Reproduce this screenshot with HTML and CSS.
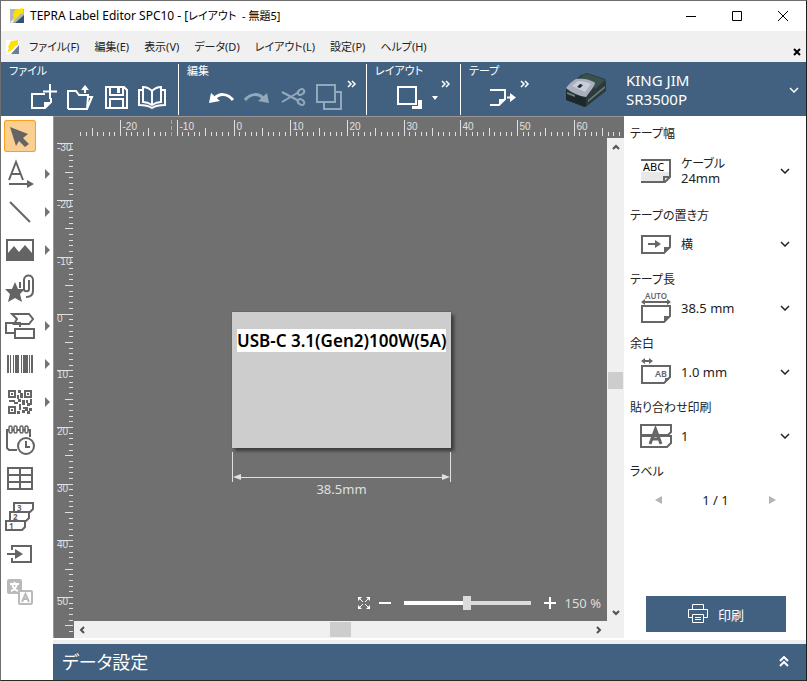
FILE: index.html
```html
<!DOCTYPE html>
<html lang="ja">
<head>
<meta charset="utf-8">
<title>TEPRA Label Editor SPC10</title>
<link rel="stylesheet" href="styles.css">
</head>
<body>
<div class="window">
  <header class="titlebar">
    <svg class="logo" viewBox="0 0 16 16" aria-hidden="true"><path fill="#b4b7ba" d="M1 1h14v14H1z"/><path fill="#35536f" d="M15 7v8H6z"/><path fill="#ffe100" d="M6 2 14 0v5l-3 1-2 3-6 4 2-4-1-2z"/><path fill="#fff" d="m1 14 5-3-3 4z"/></svg>
    <h1 class="title">TEPRA Label Editor SPC10 - [<span class="ja">レイアウト&nbsp; - 無題5]</span></h1>
    <div class="caption-buttons">
      <button aria-label="最小化"><svg viewBox="0 0 12 12"><path d="M1 6.500h10"/></svg></button>
      <button aria-label="最大化"><svg viewBox="0 0 12 12"><path d="M1.500 1.500h9v9h-9z"/></svg></button>
      <button aria-label="閉じる"><svg viewBox="0 0 12 12"><path d="m1 1 10 10M11 1 1 11"/></svg></button>
    </div>
  </header>
  <nav class="menubar">
    <svg class="logo" viewBox="0 0 16 16" aria-hidden="true"><path fill="#fff" d="M2 1h13v14H2z"/><path fill="#6b7f92" d="M15 6v9H7z"/><path fill="#ffe100" d="M7 2 14 1v5l-3 1-2 3-6 4 2-5-1-1z"/></svg>
    <div class="menus">
      <button>ファイル(F)</button><button>編集(E)</button><button>表示(V)</button><button>データ(D)</button><button>レイアウト(L)</button><button>設定(P)</button><button>ヘルプ(H)</button>
    </div>
    <button class="mdi-close" aria-label="文書を閉じる"><svg viewBox="0 0 8 8"><path d="m1 1 6 6M7 1 1 7"/></svg></button>
  </nav>
  <div class="toolbar">
    <section class="group">
      <h2>ファイル</h2>
      <div class="icons file-icons">
        <button aria-label="新規"><svg viewBox="30 84 28 28"><path d="M45 94H32v14h13l6-6v-4M50 84v15M43 91.500h14"/><path class="solid" d="M44 108v-6h7z"/></svg></button>
        <button aria-label="開く"><svg viewBox="66 84 28 28"><path d="M68 109V91h8l3 4h9v3M68 109h19l5-12h-4l-1 12M85 93v-6"/><path class="solid" d="m81 90 4-5 4 5z"/></svg></button>
        <button aria-label="保存"><svg viewBox="102 84 28 28"><path d="M106 87h18l3 3v18h-21zM110 87v8h13v-8M110 108v-9h13v9"/><path class="solid" d="M117 88h3v5h-3z"/></svg></button>
        <button aria-label="テンプレート"><svg viewBox="138 84 28 28"><path d="M152 105c-3-2-6-3-9-3V87c3 0 6 1 9 4 3-3 6-4 9-4v15c-3 0-6 1-9 3zM152 91v14"/><path d="M142 90h-3v15c6 0 10 1 13 3 3-2 7-3 13-3V90h-3"/></svg></button>
      </div>
    </section>
    <section class="group">
      <h2>編集</h2>
      <div class="icons edit-icons">
        <button aria-label="元に戻す"><svg viewBox="208 84 28 28"><path class="thick" d="M214 99c5-6 13-6 19 1"/><path class="solid" d="m211 93 9 8-11 2z"/></svg></button>
        <button class="dim" aria-label="やり直し"><svg viewBox="244 84 28 28"><path class="thick" d="M245 100c6-7 14-7 19-1"/><path class="solid" d="m267 93-9 8 11 2z"/></svg></button>
        <button class="dim" aria-label="切り取り"><svg viewBox="280 84 28 28"><path d="m282 92 17 9M282 102l17-10"/><ellipse cx="301" cy="92" rx="3.500" ry="2.500" transform="rotate(-35 301 92)"/><ellipse cx="301" cy="102" rx="3.500" ry="2.500" transform="rotate(35 301 102)"/></svg></button>
        <button class="dim" aria-label="コピー"><svg viewBox="316 84 28 28"><path d="M317 85h18v17h-18zM335 92h6v17h-17v-6"/></svg></button>
        <button class="more" aria-label="編集の続き"><svg viewBox="0 0 10 8"><path d="m1 1 3 3-3 3M5 1l3 3-3 3"/></svg></button>
      </div>
    </section>
    <section class="group">
      <h2>レイアウト</h2>
      <div class="icons layout-icons">
        <button aria-label="図形配置"><svg viewBox="396 84 28 28"><path d="M398 87h18v17h-18z"/><path class="solid" d="M418 100h4v9h-10v-3h6z"/></svg></button>
        <button class="caret" aria-label="配置メニュー"><svg viewBox="0 0 6 4"><path class="solid" d="M0 0h6L3 4z"/></svg></button>
        <button class="more" aria-label="レイアウトの続き"><svg viewBox="0 0 10 8"><path d="m1 1 3 3-3 3M5 1l3 3-3 3"/></svg></button>
      </div>
    </section>
    <section class="group">
      <h2>テープ</h2>
      <div class="icons tape-icons">
        <button aria-label="テープ送り"><svg viewBox="488 84 28 28"><path d="M489 90h15v9l-6 6h-9M506 97.500h4"/><path class="solid" d="M498 105v-6h7zM509 93l6 4.500-6 4.500z"/></svg></button>
        <button class="more" aria-label="テープの続き"><svg viewBox="0 0 10 8"><path d="m1 1 3 3-3 3M5 1l3 3-3 3"/></svg></button>
      </div>
    </section>
    <button class="device">
      <svg class="device-picture" viewBox="565 71 42 36" aria-hidden="true"><path fill="#2b3b3c" d="m566 88 15-14 6-2 18 6 1 3v9l-19 15-3 1-18-7z"/><path fill="#3a504f" d="m583 74 5-1 17 6-10 9-4-6-13-3z"/><path fill="#1c2a2c" d="m566 90 20 7v9l-20-7z"/><path fill="#a9afbc" d="M566 87c3-4 6-7 10-9 6-1 13 0 18 3 2 1 0 4-2 7l-6 8c-7-1-14-4-20-9z"/><path fill="#c9cdd7" d="m572 85 6-5c5 0 9 1 13 3l-6 8z"/><path fill="#1a2829" d="m577 86 3-3 3 1-3 3zM577 95l6 2v6l-6-2z"/><path fill="#6f7d7f" d="m567 91 8 3v2l-8-3zM588 99l17-14v2l-17 14z"/></svg>
      <span>KING JIM<br>SR3500P</span>
      <svg class="chevron" viewBox="0 0 10 6"><path d="m1 1 4 4 4-4"/></svg>
    </button>
  </div>
  <div class="body">
    <aside class="tools">
      <div class="tool"><button class="selected" aria-label="選択"><svg viewBox="4 120 32 32"><path class="fill" d="m10 127 18 7-5 4 6 6-4 3-6-6-3 5z"/></svg></button></div>
      <div class="tool has-menu"><button aria-label="文字"><svg viewBox="4 158 32 32"><path d="m9 180 7-18 7 18M11 174h10M9 184h20"/><path class="fill" d="m27 180 7 4-7 4z"/></svg></button></div>
      <div class="tool has-menu"><button aria-label="線"><svg viewBox="4 196 32 32"><path d="m10 202 20 20"/></svg></button></div>
      <div class="tool has-menu"><button aria-label="画像"><svg viewBox="4 234 32 32"><path d="M7 240h26v20H7z"/><path class="fill" d="m8 259v-6l6-7 5 6 6-7 7 8v6z"/></svg></button></div>
      <div class="tool"><button aria-label="絵文字"><svg viewBox="4 272 32 32"><path class="fill" d="m15 282 3 7h7l-5 5 2 8-7-4-7 4 2-8-5-5h7z"/><path d="M20 288v-6M24 290v-10c0-6 9-6 9 0v11c0 5-3 6-7 6M24 289c0 3 5 3 5 0v-9"/></svg></button></div>
      <div class="tool has-menu"><button aria-label="枠"><svg viewBox="4 310 32 32"><path d="M12 314h17l4 5-4 5H14l3-5zM14 333H6v-10h14v4M15 329h19v9H15z"/></svg></button></div>
      <div class="tool has-menu"><button aria-label="バーコード"><svg viewBox="4 348 32 32"><path class="fill" d="M7 355h2v18H7zM10 355h1v18h-1zM13 355h1v18h-1zM15 355h4v18h-4zM21 355h1v18h-1zM23 355h5v18h-5zM29 355h1v18h-1zM31 355h2v18h-2z"/></svg></button></div>
      <div class="tool has-menu"><button aria-label="二次元コード"><svg viewBox="4 386 32 32"><path d="M9 391h6v6H9zM25 391h6v6h-6zM9 407h6v6H9z"/><path class="fill" d="M11 393h2v2h-2zM27 393h2v2h-2zM11 409h2v2h-2zM18 390h3v3h-3zM20 393h3v5h-3zM17 395h2v4h-2zM9 400h6v2H9zM14 402h4v2h-4zM18 399h3v3h-3zM22 400h3v5h-3zM26 400h2v3h-2zM30 399h2v6h-2zM27 403h3v3h-3zM19 404h2v6h-2zM23 407h5v2h-5zM17 411h3v3h-3zM22 410h3v3h-3zM25 408h3v3h-3zM29 408h3v3h-3zM27 411h3v3h-3z"/></svg></button></div>
      <div class="tool"><button aria-label="日時"><svg viewBox="4 424 32 32"><path d="M17 450H9l-2-2v-18h23v7"/><g class="ring"><rect x="9" y="426" width="3" height="7" rx="1.500"/><rect x="14" y="426" width="3" height="7" rx="1.500"/><rect x="20" y="426" width="3" height="7" rx="1.500"/><rect x="25" y="426" width="3" height="7" rx="1.500"/></g><circle class="paper" cx="26" cy="446" r="8"/><path d="M26 441v6h4"/></svg></button></div>
      <div class="tool"><button aria-label="表"><svg viewBox="4 462 32 32"><path d="M8 468h24v21H8zM8 475h24M8 482h24M20 468v21"/></svg></button></div>
      <div class="tool"><button aria-label="連番"><svg viewBox="4 500 32 32"><path class="paper" d="M14 503h19v6l-3 3H14z"/><path class="paper" d="M10 512h19v6l-3 3H10z"/><path class="paper" d="M6 521h19v6l-3 3H6z"/><text x="17" y="511">3</text><text x="13" y="520">2</text><text x="9" y="529">1</text></svg></button></div>
      <div class="tool"><button aria-label="差し込み"><svg viewBox="4 538 32 32"><path d="M12 550v-4h19v16H12v-4M7 554h12"/><path class="fill" d="m15 549 8 5-8 5z"/></svg></button></div>
      <div class="tool"><button class="disabled" aria-label="翻訳" disabled><svg viewBox="4 576 32 32"><rect class="fill" x="7" y="579" width="15" height="15" rx="2"/><path class="glyph" d="M10 584h9M14.500 582v2M17 584c-1 4-3 6-6 7M12 584c1 4 3 6 6 7"/><rect class="paper" x="19" y="591" width="13" height="13" rx="1"/><path d="m22 602 3.500-8 3.500 8M23 599h5"/></svg></button></div>
    </aside>
    <div class="content">
      <div class="workspace">
        <div class="editor">
          <svg class="ruler-top" id="ruler-top" aria-hidden="true"></svg>
          <svg class="ruler-left" id="ruler-left" aria-hidden="true"></svg>
          <main class="canvas">
            <div class="artboard">
              <div class="label"><span class="label-text">USB-C 3.1(Gen2)100W(5A)</span></div>
              <div class="dimension">
                <svg class="arrow" viewBox="0 0 8 8"><path d="M8 1v6L0 4z"/></svg><i></i><svg class="arrow" viewBox="0 0 8 8"><path d="M0 1v6l8-3z"/></svg>
              </div>
              <div class="dimension-text">38.5mm</div>
            </div>
            <div class="zoom">
              <button aria-label="全体表示"><svg viewBox="0 0 12 12"><path d="m1 1 4 4M11 1 7 5M1 11l4-4M11 11 7 7"/><path class="fill" d="M0 0h4L0 4zM12 0v4L8 0zM0 12V8l4 4zM12 12H8l4-4z"/></svg></button>
              <button aria-label="縮小"><svg viewBox="0 0 12 12"><path d="M0 6h12"/></svg></button>
              <input type="range" min="0" max="100" value="50" aria-label="表示倍率">
              <button aria-label="拡大"><svg viewBox="0 0 12 12"><path d="M0 6h12M6 0v12"/></svg></button>
              <output>150 %</output>
            </div>
          </main>
          <div class="scroll vertical"><svg viewBox="0 0 8 6"><path d="m1 5 3-3 3 3"/></svg><i></i><svg viewBox="0 0 8 6"><path d="m1 1 3 3 3-3"/></svg></div>
          <div class="scroll horizontal"><svg viewBox="0 0 6 8"><path d="M5 1 2 4l3 3"/></svg><i></i><svg viewBox="0 0 6 8"><path d="m1 1 3 3-3 3"/></svg></div>
        </div>
        <aside class="settings">
          <section>
            <h3>テープ幅</h3>
            <button class="row tall">
              <svg class="pic" viewBox="640 155 32 32"><path fill="#fff" stroke="none" d="M641 160h28v12h-28z"/><path fill="#e8e8e8" stroke="none" d="M641 172h28v5l-5 5h-23z"/><path d="M641 160h29v17l-5 5h-24"/><path d="M664 182v-5h6"/><text class="abc" x="643" y="171">ABC</text></svg>
              <span class="lines"><span>ケーブル</span><span>24mm</span></span>
              <svg class="chevron" viewBox="0 0 10 6"><path d="m1 1 4 4 4-4"/></svg>
            </button>
          </section>
          <section>
            <h3><label for="direction">テープの置き方</label></h3>
            <div class="row">
              <svg class="pic" viewBox="640 228 32 32"><path d="M642 236h28v11l-6 6h-22zM648 244h8"/><path class="fill" d="m655 240 6 4-6 4zM664 253v-6h6z"/></svg>
              <select id="direction" class="ja"><option>横</option></select>
              <svg class="chevron" viewBox="0 0 10 6"><path d="m1 1 4 4 4-4"/></svg>
            </div>
          </section>
          <section>
            <h3><label for="length">テープ長</label></h3>
            <div class="row">
              <svg class="pic" viewBox="640 292 32 32"><text class="auto" x="645" y="299">AUTO</text><path d="M642 306h28v10l-6 6h-22zM644 302h24"/><path class="fill" d="m641 302 4-3v6zM671 302l-4-3v6zM664 322v-6h6z"/></svg>
              <select id="length"><option>38.5 mm</option></select>
              <svg class="chevron" viewBox="0 0 10 6"><path d="m1 1 4 4 4-4"/></svg>
            </div>
          </section>
          <section>
            <h3><label for="margin">余白</label></h3>
            <div class="row">
              <svg class="pic" viewBox="640 356 32 32"><path d="M642 366h28v11l-6 6h-22zM644 361h6"/><path class="fill" d="m641 361 4-3v6zM653 361l-4-3v6zM665 383v-5h5z"/><text class="ab" x="655" y="377">AB</text></svg>
              <select id="margin"><option>1.0 mm</option></select>
              <svg class="chevron" viewBox="0 0 10 6"><path d="m1 1 4 4 4-4"/></svg>
            </div>
          </section>
          <section>
            <h3><label for="split">貼り合わせ印刷</label></h3>
            <div class="row">
              <svg class="pic" viewBox="640 420 32 32"><path d="M641 425h30v7l-3 3h-27zM641 436h30v7l-4 4h-26z"/><path class="wide" d="m650 444 5.500-15 5.500 15M652 439h7"/></svg>
              <select id="split"><option>1</option></select>
              <svg class="chevron" viewBox="0 0 10 6"><path d="m1 1 4 4 4-4"/></svg>
            </div>
          </section>
          <section>
            <h3>ラベル</h3>
            <div class="pager">
              <button aria-label="前のラベル"><svg viewBox="0 0 7 8"><path d="M7 0v8L0 4z"/></svg></button>
              <span>1 / 1</span>
              <button aria-label="次のラベル"><svg viewBox="0 0 7 8"><path d="M0 0v8l7-4z"/></svg></button>
            </div>
          </section>
          <button class="print">
            <svg viewBox="0 0 20 20"><path d="M4.500 5.500v-5h11v5M4.500 13.500h-4v-8h19v8h-4M4.500 10.500h11v8h-11zM7 13.500h6M7 15.500h6"/></svg>
            印刷
          </button>
        </aside>
      </div>
      <footer class="data-bar">
        <h2>データ設定</h2>
        <button aria-label="展開"><svg viewBox="0 0 10 12"><path d="m1 5 4-4 4 4M1 10l4-4 4 4"/></svg></button>
      </footer>
    </div>
  </div>
</div>
<script src="script.js"></script>
</body>
</html>
```
FILE: styles.css
```css
* { box-sizing: border-box; }

body {
  margin: 0;
  font-family: "Noto Sans", "Noto Sans CJK JP", sans-serif;
  font-feature-settings: "palt";
  font-size: 12px;
  color: #222;
}

h1, h2, h3 { margin: 0; font-weight: 400; }

button, select {
  margin: 0;
  padding: 0;
  border: 0;
  background: none;
  font: inherit;
  font-feature-settings: inherit;
  color: inherit;
}

svg { display: block; fill: none; stroke: currentColor; flex: none; }

.window {
  display: flex;
  flex-direction: column;
  min-height: 100vh;
  border: 1px solid #6e6e6e;
  border-right-color: #1c1c1c;
  border-bottom-color: #2b2a1c;
  background: #fff;
}

.logo { width: 16px; height: 16px; stroke: none; }

.titlebar {
  display: flex;
  align-items: center;
  gap: 5px;
  height: 30px;
  padding-left: 8px;
  color: #000;
}
.title { flex: 1; font-size: 12px; line-height: 16px; padding-bottom: 1px; }
.title .ja { font-size: 11px; }
.caption-buttons { display: flex; }
.caption-buttons button { width: 46px; height: 30px; padding: 0 17px; }
.caption-buttons svg { width: 12px; height: 12px; }

.menubar {
  display: flex;
  align-items: center;
  height: 31px;
  padding: 0 5px 0 3px;
  background: #f0f0f0;
}
.menus {
  display: flex;
  flex: 1;
  gap: 15px;
  padding: 0 0 2px 9px;
  font-size: 11px;
}
.mdi-close { align-self: flex-end; padding-bottom: 6px; color: #000; }
.mdi-close svg { width: 8px; height: 8px; stroke-width: 2; }

.toolbar {
  display: flex;
  height: 54px;
  padding-top: 2px;
  background: #426180;
  color: #fff;
}
.group { padding: 0 9px 0 8px; border-right: 1px solid #fff; margin-bottom: 1px; }
.group:nth-of-type(4) { border: 0; }
.group h2 { font-size: 11px; line-height: 14px; }
.icons { display: flex; gap: 8px; padding-top: 6px; }
.icons button svg { width: 28px; height: 28px; stroke-width: 2; }
.icons .thick { stroke-width: 3; }
.icons .solid { fill: currentColor; stroke: none; }
.icons .dim { color: #91a9ba; }
.icons .more { align-self: flex-start; margin: -4px 0 0 -5px; }
.icons button.more svg { width: 10px; height: 8px; stroke-width: 1.5; }
.icons button.caret svg { width: 6px; height: 4px; }
.file-icons { padding-left: 21px; padding-right: 3px; }
.edit-icons { padding-left: 21px; }
.layout-icons { padding-left: 21px; }
.tape-icons { padding-left: 20px; }

.device {
  display: flex;
  flex: 1;
  align-items: center;
  margin-left: 26px;
  padding-right: 7px;
  font-size: 15px;
  line-height: 19px;
  text-align: left;
}
.device span { flex: 1; }
.device-picture { width: 42px; height: 36px; margin-right: 19px; stroke: none; }
.chevron { width: 10px; height: 6px; stroke-width: 1.5; }

.body { display: flex; flex: 1; }

.tools {
  display: flex;
  flex-direction: column;
  gap: 6px;
  width: 52px;
  padding: 4px 3px;
  color: #646464;
}
.tool { display: flex; align-items: center; justify-content: space-between; }
.tool button { width: 32px; height: 32px; }
.tool svg { width: 32px; height: 32px; stroke-width: 2; }
.tool .fill { fill: currentColor; stroke: none; }
.tool .paper { fill: #fff; }
.tool .ring { fill: #fff; stroke-width: 1.5; }
.tool .glyph { stroke: #fff; }
.tool text { fill: currentColor; stroke: none; font-size: 8px; font-weight: 700; }
.tool .selected { border-radius: 3px; background: #fbcf92; box-shadow: inset 0 0 0 1px #f9a11b; }
.tool .disabled { color: #bababa; }
.has-menu::after {
  content: "";
  border: 5px solid transparent;
  border-left-color: #747474;
  border-right: 0;
}

.content { display: flex; flex: 1; flex-direction: column; min-width: 0; }
.workspace { display: flex; flex: 1; border-bottom: 4px solid #eee; }

.editor {
  display: grid;
  flex: 1;
  grid-template-columns: 20px 1fr 17px;
  grid-template-rows: 21px 1fr 17px;
  min-width: 0;
  margin-bottom: 2px;
  border-top: 1px solid #989898;
  border-left: 1px solid #989898;
  background: #707070;
  color: #e0e0e0;
}
.ruler-top { grid-area: 1 / 1 / 2 / 4; width: 100%; height: 21px; }
.ruler-left { grid-area: 2 / 1 / 4 / 2; width: 20px; height: 100%; }
.ruler-top text, .ruler-left text {
  fill: #e0e0e0;
  stroke: none;
  font-family: "Liberation Sans", sans-serif;
  font-size: 10px;
}
.canvas { position: relative; min-width: 0; }

.artboard { position: absolute; left: 158px; top: 174px; width: 219px; }
.label {
  height: 136px;
  padding: 17px 5px 0;
  background: #cdcdcd;
  box-shadow: 0 0 1px #444, 3px 3px 3px #3c3c3c;
}
.label-text {
  display: block;
  background: #fff;
  color: #000;
  font-size: 17px;
  font-weight: 600;
  line-height: 23px;
  text-align: center;
  white-space: nowrap;
}
.dimension {
  display: flex;
  align-items: center;
  height: 30px;
  margin-top: 4px;
  padding-top: 20px;
  border: solid #e0e0e0;
  border-width: 0 1px;
}
.dimension i { flex: 1; height: 1px; background: #e0e0e0; }
.arrow { width: 8px; height: 8px; fill: #e0e0e0; stroke: none; }
.dimension-text { font-size: 13px; line-height: 15px; text-align: center; }

.zoom {
  position: absolute;
  right: 6px;
  bottom: 9px;
  display: flex;
  align-items: center;
  gap: 9px;
  height: 18px;
  color: #fff;
}
.zoom svg { width: 12px; height: 12px; stroke-width: 2; }
.zoom button:first-child svg { stroke-width: 1; }
.zoom .fill { fill: currentColor; stroke: none; }
.zoom output { color: #ddd; font-size: 13px; }
.zoom input {
  width: 127px;
  height: 14px;
  margin: 0 4px;
  appearance: none;
  background: linear-gradient(90deg, #fff 50%, #dcdcdc 50%) center / 100% 4px no-repeat;
}
.zoom input::-webkit-slider-thumb { appearance: none; width: 8px; height: 14px; background: #dcdcdc; }

.scroll {
  display: flex;
  align-items: center;
  background: #f0f0f0;
  color: #505050;
}
.scroll svg { stroke-width: 2; }
.scroll i { background: #cdcdcd; }
.vertical { flex-direction: column; grid-area: 2 / 3 / 4 / 4; padding: 6px 0 22px; }
.vertical svg { width: 8px; height: 6px; }
.vertical i { width: 15px; height: 17px; margin: auto 0; }
.horizontal { grid-area: 3 / 2 / 4 / 3; padding: 0 5px; }
.horizontal svg { width: 6px; height: 8px; }
.horizontal i { width: 21px; height: 15px; margin: auto; }

.settings {
  display: flex;
  flex-direction: column;
  gap: 6px;
  width: 182px;
  padding: 9px 0 8px 6px;
  background: #fff;
}
.settings h3 { font-size: 12px; line-height: 18px; }
.row {
  display: flex;
  align-items: center;
  gap: 9px;
  width: 100%;
  height: 40px;
  padding: 0 16px 2px 10px;
  font-size: 13px;
  line-height: 15px;
  text-align: left;
}
.row.tall { height: 58px; }
.row select { flex: 1; min-width: 0; appearance: none; height: 24px; }
.lines { display: flex; flex: 1; flex-direction: column; }
.lines span:first-child, .row select.ja { font-size: 12px; }
.pic { width: 32px; height: 32px; color: #666; stroke-width: 2; overflow: visible; }
.pic .fill { fill: currentColor; stroke: none; }
.pic .wide { stroke-width: 3; }
.pic text { fill: currentColor; stroke: none; font-size: 9px; font-weight: 600; }
.pic .abc { fill: #000; font-size: 11px; font-weight: 400; }
.pic .auto { font-size: 8px; }
.pager {
  display: flex;
  align-items: center;
  justify-content: space-between;
  height: 40px;
  padding: 0 30px 2px 25px;
  font-size: 13px;
}
.pager svg { width: 7px; height: 8px; fill: #b4b4b4; stroke: none; }
.print {
  display: flex;
  align-items: center;
  justify-content: center;
  gap: 10px;
  height: 36px;
  margin: auto 20px 0 16px;
  background: #426180;
  color: #fff;
  font-size: 13px;
}
.print svg { width: 20px; height: 20px; }

.data-bar {
  display: flex;
  align-items: center;
  justify-content: space-between;
  height: 36px;
  padding: 0 17px 0 9px;
  background: #426180;
  color: #fff;
}
.data-bar h2 { font-size: 18px; line-height: 36px; }
.data-bar svg { width: 10px; height: 12px; stroke-width: 2; }
```
FILE: script.js
```js
const SVG = "http://www.w3.org/2000/svg";
const PX_PER_MM = 96 / 25.4 * 1.5;

function add(parent, name, attrs, text) {
  const el = document.createElementNS(SVG, name);
  for (const key in attrs) el.setAttribute(key, attrs[key]);
  if (text !== undefined) el.textContent = text;
  parent.appendChild(el);
}

function tickLength(mm) {
  if (mm % 10 === 0) return 16;
  return mm % 5 === 0 ? 8 : 4;
}

function drawTop(svg, origin, from, to) {
  let path = "";
  for (let mm = from; mm <= to; mm++) {
    const x = Math.floor(origin + mm * PX_PER_MM) + 0.5;
    path += `M${x} 19v${-tickLength(mm)}`;
    if (mm % 10 === 0) add(svg, "text", { x: x + 2, y: 13 }, mm);
  }
  add(svg, "path", { d: path });
  add(svg, "path", { d: "M117.500 3v16", "stroke-dasharray": "4 2", stroke: "#aaa" });
}

function drawLeft(svg, origin, from, to) {
  let path = "";
  for (let mm = from; mm <= to; mm++) {
    const y = Math.floor(origin + mm * PX_PER_MM) + 0.5;
    path += `M19 ${y}h${-tickLength(mm)}`;
    if (mm % 10 === 0) add(svg, "text", { x: 3, y: y + 7 }, mm);
  }
  add(svg, "path", { d: path });
}

drawTop(document.getElementById("ruler-top"), 180, -27, 68);
drawLeft(document.getElementById("ruler-left"), 176, -30, 56);
```
